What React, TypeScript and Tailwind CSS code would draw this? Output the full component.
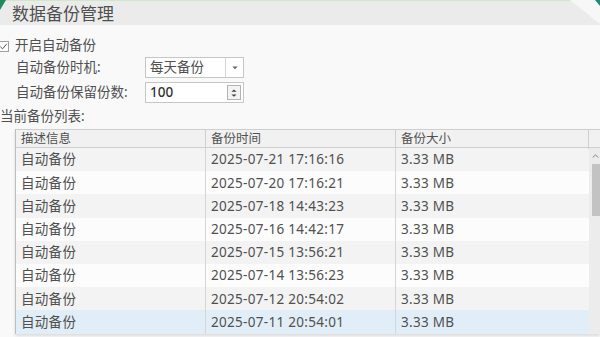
import React from 'react';

const rows = [
    { desc: '自动备份', time: '2025-07-21 17:16:16', size: '3.33 MB' },
    { desc: '自动备份', time: '2025-07-20 17:16:21', size: '3.33 MB' },
    { desc: '自动备份', time: '2025-07-18 14:43:23', size: '3.33 MB' },
    { desc: '自动备份', time: '2025-07-16 14:42:17', size: '3.33 MB' },
    { desc: '自动备份', time: '2025-07-15 13:56:21', size: '3.33 MB' },
    { desc: '自动备份', time: '2025-07-14 13:56:23', size: '3.33 MB' },
    { desc: '自动备份', time: '2025-07-12 20:54:02', size: '3.33 MB' },
    { desc: '自动备份', time: '2025-07-11 20:54:01', size: '3.33 MB' },
];

const font = "font-['Noto_Sans','Noto_Sans_CJK_SC',sans-serif]";

export default function App() {
    return (
        <div className={`relative w-[600px] h-[337px] overflow-hidden bg-[#f9f9f9] text-[#505050] ${font}`}>
            {/* corner decorations */}
            <div className="absolute left-0 top-0 w-0 h-0 border-t-[10px] border-t-[#1f8a5a] border-r-[6px] border-r-transparent z-10" />
            <div className="absolute right-0 top-0 w-0 h-0 border-t-[24px] border-t-[#f7f7f7] border-l-[30px] border-l-transparent z-10" />
            <div className="absolute right-0 top-0 w-0 h-0 border-t-[6px] border-t-[#1a8f78] border-l-[5px] border-l-transparent z-20" />

            {/* title bar */}
            <div className="h-[25px] bg-[#ebebeb] border-t border-t-[#cfe8c8] flex items-center pl-[12px]">
                <span className="text-[17px] leading-none text-[#4f4f4f]">数据备份管理</span>
            </div>

            {/* auto backup toggle */}
            <div className="mt-[11px] h-[20px] flex items-center -ml-[2px]">
                <div className="w-[11px] h-[11px] border border-[#a0a0a0] bg-white flex items-center justify-center">
                    <svg viewBox="0 0 10 10" className="w-[9px] h-[9px]">
                        <path d="M1.5 5.2 L4 7.6 L8.6 2" fill="none" stroke="#555" strokeWidth="1.1" />
                    </svg>
                </div>
                <span className="ml-[6px] text-[13.5px] leading-none">开启自动备份</span>
            </div>

            <div className="mt-[1px] h-[21px] flex items-center pl-[16px]">
                <span className="w-[129px] text-[13.5px] leading-none">自动备份时机:</span>
                <div className="w-[99px] h-[21px] border border-[#c6c6c6] bg-white flex">
                    <span className="flex-1 pl-[4px] flex items-center text-[13.5px] leading-none">每天备份</span>
                    <div className="w-[18px] border-l border-[#d4d4d4] flex items-center justify-center">
                        <svg viewBox="0 0 8 5" className="w-[6px] h-[4px]"><path d="M0.5 0.5 L4 4 L7.5 0.5 Z" fill="#666" /></svg>
                    </div>
                </div>
            </div>

            <div className="mt-[4px] h-[21px] flex items-center pl-[16px]">
                <span className="w-[129px] text-[13.5px] leading-none">自动备份保留份数:</span>
                <div className="w-[99px] h-[21px] border border-[#c6c6c6] bg-white flex items-center">
                    <span className="flex-1 pl-[4px] text-[13.5px] leading-none text-[#333] font-medium">100</span>
                    <div className="mr-[2px] w-[14px] h-[15px] border border-[#b4b4b4] bg-[#f3f3f3] flex flex-col items-center justify-center gap-[2px]">
                        <svg viewBox="0 0 8 4" className="w-[6px] h-[3px]"><path d="M0.5 3.5 L4 0.5 L7.5 3.5 Z" fill="#444" /></svg>
                        <svg viewBox="0 0 8 4" className="w-[6px] h-[3px]"><path d="M0.5 0.5 L4 3.5 L7.5 0.5 Z" fill="#444" /></svg>
                    </div>
                </div>
            </div>

            <div className="mt-[5px] h-[18px] flex items-center">
                <span className="text-[13.5px] leading-none">当前备份列表:</span>
            </div>

            {/* table */}
            <div className="mt-[3px] ml-[15px] border-l border-[#bdbdbd] flex shadow-[0_2px_3px_rgba(0,0,0,0.12)]">
                <div className="w-[573px]">
                    <div className="grid grid-cols-[190px_190px_193px] h-[19px] bg-[#f1f1f1] border-t border-b border-[#cfcfcf] text-[12.5px]">
                        <div className="pl-[5px] flex items-center border-r border-[#cfcfcf]">描述信息</div>
                        <div className="pl-[5px] flex items-center border-r border-[#cfcfcf]">备份时间</div>
                        <div className="pl-[5px] flex items-center border-r border-[#cfcfcf]">备份大小</div>
                    </div>
                    {rows.map((r, i) => (
                        <div
                            key={i}
                            className={`grid grid-cols-[190px_190px_193px] h-[23.2px] text-[13.5px] tracking-[0.3px] ${
                                i === rows.length - 1 ? 'bg-[#e2eef7]' : i % 2 === 0 ? 'bg-[#f3f3f3]' : 'bg-[#fcfcfc]'
                            }`}
                        >
                            <div className="pl-[5px] flex items-center border-r border-[#d6d6d6]">{r.desc}</div>
                            <div className="pl-[5px] flex items-center border-r border-[#d6d6d6]">{r.time}</div>
                            <div className="pl-[5px] flex items-center">{r.size}</div>
                        </div>
                    ))}
                </div>
                {/* scrollbar */}
                <div className="w-[12px] flex flex-col bg-[#ececec]">
                    <div className="h-[19px] bg-[#f1f1f1] border-t border-b border-[#cfcfcf]" />
                    <div className="h-[16px] flex items-center justify-center">
                        <svg viewBox="0 0 8 5" className="w-[7px] h-[4px]"><path d="M0.5 4.5 L4 1 L7.5 4.5" fill="none" stroke="#666" strokeWidth="1" /></svg>
                    </div>
                    <div className="ml-[3px] w-[9px] h-[52px] bg-[#c3c3c3]" />
                </div>
            </div>
        </div>
    );
}
